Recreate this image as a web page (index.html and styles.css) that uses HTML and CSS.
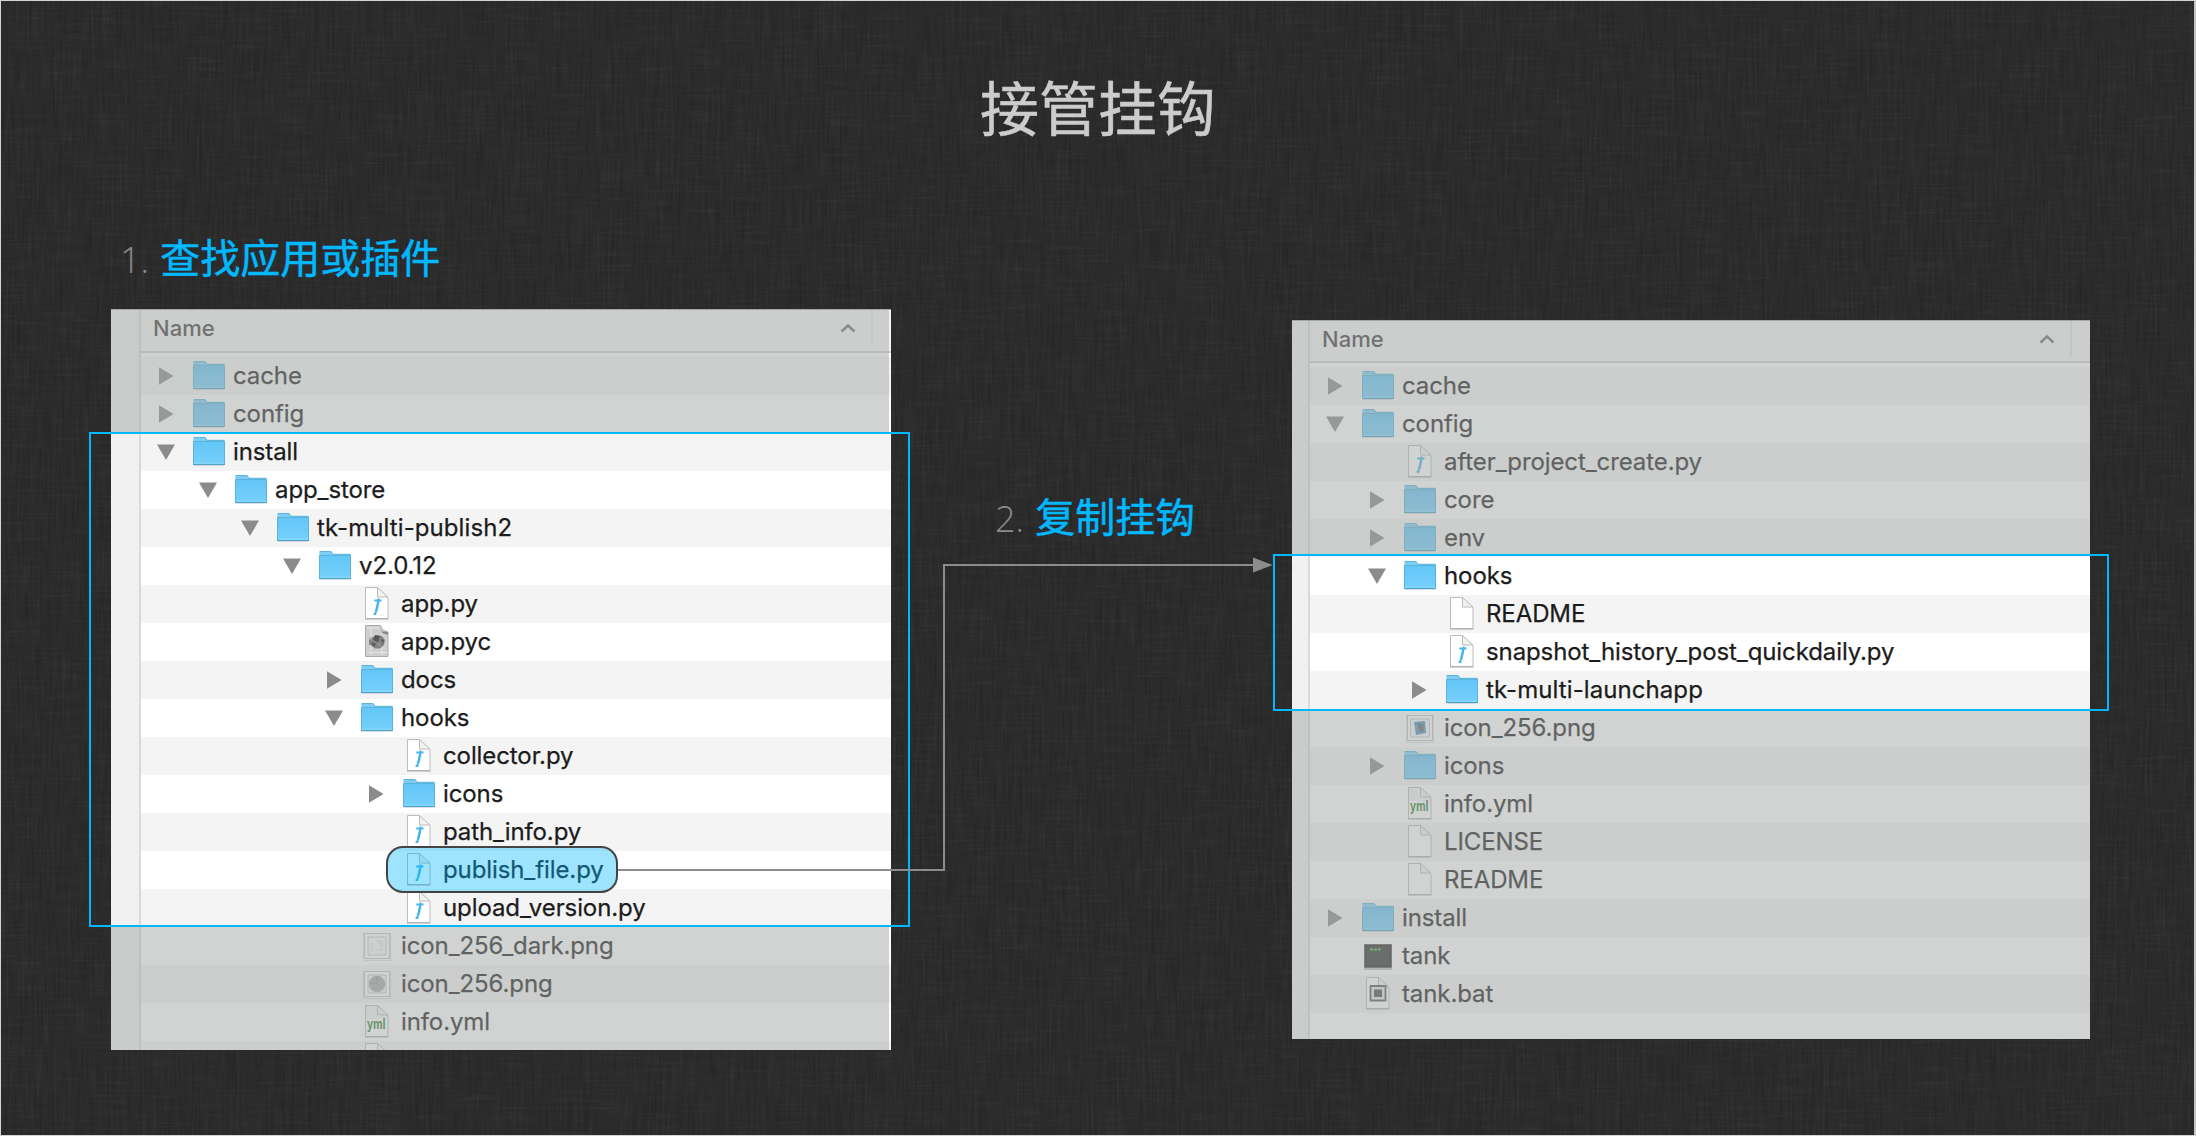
FILE: index.html
```html
<!DOCTYPE html>
<html lang="zh-CN">
<head>
<meta charset="utf-8">
<title>接管挂钩</title>
<link rel="stylesheet" href="styles.css">
</head>
<body>
<svg class="defs" width="0" height="0" aria-hidden="true">
  <defs>
    <linearGradient id="folder-fill" x1="0" y1="0" x2="0" y2="1">
      <stop offset="0" stop-color="#63c6f7"/>
      <stop offset="1" stop-color="#76d0fb"/>
    </linearGradient>
    <symbol id="folder" viewBox="0 0 32 38">
      <path d="M.5 32V5.2Q.5 4 1.700 4H12l2 3h17q.7 0 .7.8V32z" fill="#7fcdf3"/>
      <path d="M.5 5.200Q.5 4.500 1.500 4.500H12l2 2.800h17.500" fill="none" stroke="#5ab4dd"/>
      <path d="M0 8.500h32V32H0z" fill="url(#folder-fill)"/>
      <path d="M.5 8.500h31V31.500H.5z" fill="none" stroke="#58b4df"/>
      <path d="M1 30h30" stroke="#8bdcff"/>
      <path d="M0 31.500h32" stroke="#4ba3cb"/>
      <path d="M1 32.500h30" stroke="#000" stroke-opacity=".12"/>
    </symbol>
    <symbol id="file" viewBox="0 0 32 38">
      <path d="M4.500 2.500h12l10.500 10.500v20.500H4.500z" fill="#fff" stroke="#bcbcbc"/>
      <path d="M16.500 2.500v9.500h10.500z" fill="#f2f2f2" stroke="#bcbcbc"/>
      <path d="M4 34h23.500" stroke="#aaa"/>
    </symbol>
    <symbol id="script" viewBox="0 0 32 38">
      <use href="#file"/>
      <path d="M17.800 13.500L14.300 29M13.300 15.500h7.200M12.600 29h2.500M17.500 17l-2 9" fill="none" stroke="#45b5ee" stroke-width="2"/>
    </symbol>
    <symbol id="compiled" viewBox="0 0 32 38">
      <path d="M4.500 2.500h15l2 4.500 5.500 2v24.500H4.500z" fill="#cfcfcf" stroke="#aaa"/>
      <path d="M6 5h13M6 29.500h20M10 4v28M21 9v23" stroke="#e6e6e6"/>
      <path d="M19 3l2 5.500 6 .5v3l-6-2z" fill="#8a8a8a"/>
      <path d="M8 17l4-3 4-2 5 1 3 4-1 5-4 3.500h-5l-4-3-2-1z" fill="#838383"/>
      <path d="M14 12l5 1-2 6-5-2zM10 19l5 2-2 3zM20 16l3 1-1 4z" fill="#565656"/>
      <path d="M8 16l2-2 1 4M17 20l2 3" stroke="#a7a7a7" fill="none"/>
    </symbol>
    <symbol id="image-frame" viewBox="0 0 32 38">
      <path d="M2.500 6.500h27v27h-27z" fill="none" stroke="#000" stroke-opacity=".12"/>
      <path d="M3.500 6.500h25v25h-25z" fill="#fff" stroke="#c4c4c4"/>
    </symbol>
    <symbol id="image-dark" viewBox="0 0 32 38">
      <use href="#image-frame"/>
      <path d="M7 10h18v18H7z" fill="#f8f8f8" stroke="#c8c8c8"/>
      <path d="M11 24v-8M15 14h4v4M21 14v9h-7" stroke="#dedede" fill="none"/>
    </symbol>
    <symbol id="image-globe" viewBox="0 0 32 38">
      <use href="#image-frame"/>
      <path d="M7 10h18v18H7z" fill="#f2f2f2" stroke="#c8c8c8"/>
      <circle cx="16" cy="19" r="8.200" fill="#a9a9a9"/>
      <path d="M16 11v8l5 4M9 18h7" stroke="#959595" fill="none"/>
    </symbol>
    <symbol id="image-blue" viewBox="0 0 32 38">
      <use href="#image-frame"/>
      <path d="M6.500 10h19v18h-19z" fill="#f4f4f4" stroke="#c8c8c8"/>
      <path d="M10 13l11-1 1 12-10 2z" fill="#4b93bd"/>
      <path d="M14 14l5 1 1 7-6 1z" fill="#5c6a74"/>
      <path d="M12 17l3 5" stroke="#9aa8b0"/>
    </symbol>
    <symbol id="yaml" viewBox="0 0 32 38">
      <use href="#file"/>
      <path d="M5 3h11v9l10 1v3H5z" fill="#ececec" opacity=".7"/>
      <text x="6" y="26" class="yaml-mark" textLength="18.500" lengthAdjust="spacingAndGlyphs">yml</text>
    </symbol>
    <symbol id="terminal" viewBox="0 0 32 38">
      <path d="M2 32h28" stroke="#000" stroke-opacity=".25" stroke-width="2"/>
      <path d="M2.500 7.500h27v23h-27z" fill="#2b2b2b" stroke="#5b5b5b"/>
      <path d="M5 9.500h22v18.500H5z" fill="#353535"/>
      <path d="M8 12.500h10.500" stroke="#4dbb50" stroke-width="2" stroke-dasharray="3 1"/>
    </symbol>
    <symbol id="batch" viewBox="0 0 32 38">
      <use href="#file"/>
      <path d="M8.500 11h15v14.500h-15z" fill="#e4e4e4" stroke="#5b5b5b" stroke-width="1.800"/>
      <path d="M12 14.500h8v7.500h-8z" fill="#4e4e4e"/>
    </symbol>
    <symbol id="closed" viewBox="0 0 18 38"><path d="M2 10.200v17.600L16.600 19z" fill="#8b8b8b"/></symbol>
    <symbol id="open" viewBox="0 0 18 38"><path d="M0 11.500h18L9 27z" fill="#8b8b8b"/></symbol>
    <filter id="weave-rows" x="0" y="0" width="100%" height="100%">
      <feTurbulence type="fractalNoise" baseFrequency="0.022 0.4" numOctaves="2" seed="4"/>
      <feColorMatrix values="0 0 0 0 1  0 0 0 0 1  0 0 0 0 1  .9 0 0 0 -.4"/>
    </filter>
    <filter id="weave-columns" x="0" y="0" width="100%" height="100%">
      <feTurbulence type="fractalNoise" baseFrequency="0.4 0.022" numOctaves="2" seed="9"/>
      <feColorMatrix values="0 0 0 0 0  0 0 0 0 0  0 0 0 0 0  .9 0 0 0 -.4"/>
    </filter>
    <filter id="weave-light" x="0" y="0" width="100%" height="100%">
      <feTurbulence type="fractalNoise" baseFrequency="0.35 0.02" numOctaves="2" seed="21"/>
      <feColorMatrix values="0 0 0 0 1  0 0 0 0 1  0 0 0 0 1  .9 0 0 0 -.4"/>
    </filter>
  </defs>
</svg>

<main class="slide">
  <svg class="linen" width="2196" height="1136" aria-hidden="true">
    <rect width="2196" height="1136" filter="url(#weave-columns)" opacity=".3"/>
    <rect width="2196" height="1136" filter="url(#weave-rows)" opacity=".07"/>
    <rect width="2196" height="1136" filter="url(#weave-light)" opacity=".07"/>
  </svg>

  <h1 class="title">接管挂钩</h1>

  <div class="board">
    <section class="source">
      <h2 class="step"><span class="num">1.</span>查找应用或插件</h2>
      <div class="finder finder-source">
        <div class="gutter"></div>
        <div class="listing">
          <div class="head"><span>Name</span><svg class="sort" viewBox="0 0 16 10"><path d="M1.500 8.500L8 2.500l6.500 6"/></svg></div>
          <ul class="rows">
            <li class="row d0"><svg class="tri"><use href="#closed"/></svg><svg class="ico"><use href="#folder"/></svg>cache</li>
            <li class="row d0"><svg class="tri"><use href="#closed"/></svg><svg class="ico"><use href="#folder"/></svg>config</li>
            <li class="row d0"><svg class="tri"><use href="#open"/></svg><svg class="ico"><use href="#folder"/></svg>install</li>
            <li class="row d1"><svg class="tri"><use href="#open"/></svg><svg class="ico"><use href="#folder"/></svg>app_store</li>
            <li class="row d2 wide"><svg class="tri"><use href="#open"/></svg><svg class="ico"><use href="#folder"/></svg>tk-multi-publish2</li>
            <li class="row d3"><svg class="tri"><use href="#open"/></svg><svg class="ico"><use href="#folder"/></svg>v2.0.12</li>
            <li class="row d4"><svg class="tri"></svg><svg class="ico"><use href="#script"/></svg>app.py</li>
            <li class="row d4"><svg class="tri"></svg><svg class="ico"><use href="#compiled"/></svg>app.pyc</li>
            <li class="row d4"><svg class="tri"><use href="#closed"/></svg><svg class="ico"><use href="#folder"/></svg>docs</li>
            <li class="row d4"><svg class="tri"><use href="#open"/></svg><svg class="ico"><use href="#folder"/></svg>hooks</li>
            <li class="row d5"><svg class="tri"></svg><svg class="ico"><use href="#script"/></svg>collector.py</li>
            <li class="row d5"><svg class="tri"><use href="#closed"/></svg><svg class="ico"><use href="#folder"/></svg>icons</li>
            <li class="row d5"><svg class="tri"></svg><svg class="ico"><use href="#script"/></svg>path_info.py</li>
            <li class="row d5"><svg class="tri"></svg><svg class="ico"><use href="#script"/></svg>publish_file.py</li>
            <li class="row d5"><svg class="tri"></svg><svg class="ico"><use href="#script"/></svg>upload_version.py</li>
            <li class="row d4"><svg class="tri"></svg><svg class="ico"><use href="#image-dark"/></svg>icon_256_dark.png</li>
            <li class="row d4"><svg class="tri"></svg><svg class="ico"><use href="#image-globe"/></svg>icon_256.png</li>
            <li class="row d4"><svg class="tri"></svg><svg class="ico"><use href="#yaml"/></svg>info.yml</li>
            <li class="row d4"><svg class="tri"></svg><svg class="ico"><use href="#file"/></svg></li>
          </ul>
        </div>
        <div class="dim dim-top"></div>
        <div class="dim dim-bottom"></div>
      </div>
    </section>

    <section class="copy">
      <h2 class="step"><span class="num">2.</span>复制挂钩</h2>
    </section>

    <section class="target">
      <div class="finder finder-target">
        <div class="gutter"></div>
        <div class="listing">
          <div class="head"><span>Name</span><svg class="sort" viewBox="0 0 16 10"><path d="M1.500 8.500L8 2.500l6.500 6"/></svg></div>
          <ul class="rows">
            <li class="row d0"><svg class="tri"><use href="#closed"/></svg><svg class="ico"><use href="#folder"/></svg>cache</li>
            <li class="row d0"><svg class="tri"><use href="#open"/></svg><svg class="ico"><use href="#folder"/></svg>config</li>
            <li class="row d1"><svg class="tri"></svg><svg class="ico"><use href="#script"/></svg>after_project_create.py</li>
            <li class="row d1"><svg class="tri"><use href="#closed"/></svg><svg class="ico"><use href="#folder"/></svg>core</li>
            <li class="row d1"><svg class="tri"><use href="#closed"/></svg><svg class="ico"><use href="#folder"/></svg>env</li>
            <li class="row d1"><svg class="tri"><use href="#open"/></svg><svg class="ico"><use href="#folder"/></svg>hooks</li>
            <li class="row d2"><svg class="tri"></svg><svg class="ico"><use href="#file"/></svg>README</li>
            <li class="row d2"><svg class="tri"></svg><svg class="ico"><use href="#script"/></svg>snapshot_history_post_quickdaily.py</li>
            <li class="row d2 wide"><svg class="tri"><use href="#closed"/></svg><svg class="ico"><use href="#folder"/></svg>tk-multi-launchapp</li>
            <li class="row d1"><svg class="tri"></svg><svg class="ico"><use href="#image-blue"/></svg>icon_256.png</li>
            <li class="row d1"><svg class="tri"><use href="#closed"/></svg><svg class="ico"><use href="#folder"/></svg>icons</li>
            <li class="row d1"><svg class="tri"></svg><svg class="ico"><use href="#yaml"/></svg>info.yml</li>
            <li class="row d1"><svg class="tri"></svg><svg class="ico"><use href="#file"/></svg>LICENSE</li>
            <li class="row d1"><svg class="tri"></svg><svg class="ico"><use href="#file"/></svg>README</li>
            <li class="row d0"><svg class="tri"><use href="#closed"/></svg><svg class="ico"><use href="#folder"/></svg>install</li>
            <li class="row d0"><svg class="tri"></svg><svg class="ico"><use href="#terminal"/></svg>tank</li>
            <li class="row d0"><svg class="tri"></svg><svg class="ico"><use href="#batch"/></svg>tank.bat</li>
          </ul>
        </div>
        <div class="dim dim-top"></div>
        <div class="dim dim-bottom"></div>
      </div>
    </section>
  </div>

  <div class="focus focus-source"></div>
  <div class="focus focus-target"></div>
  <svg class="connector" width="2196" height="1136" aria-hidden="true">
    <path d="M617 870H944V565H1254" fill="none" stroke="#8c8c8c" stroke-width="2"/>
    <path d="M1253 557.500V572.500L1272.500 565z" fill="#8c8c8c"/>
  </svg>
  <div class="picked"></div>
</main>
</body>
</html>
```
FILE: styles.css
```css
* { box-sizing: border-box; }

body { margin: 0; }

.defs { position: absolute; }

.slide {
  position: relative;
  width: 2196px;
  height: 1136px;
  overflow: hidden;
  background: #2b2b2b;
  font-family: "Noto Sans CJK SC", sans-serif;
}

.slide::after {
  content: "";
  position: absolute;
  inset: 0;
  border: 1px solid #cdd6d3;
  border-right: 2px solid #c4c4c4;
}

.linen {
  position: absolute;
  inset: 0;
}

.title {
  position: relative;
  margin: 0;
  padding-top: 62px;
  height: 236px;
  font-size: 59px;
  line-height: 88px;
  font-weight: 400;
  text-align: center;
  color: #ccc;
  -webkit-text-stroke: .5px #ccc;
}

.board {
  position: relative;
  display: grid;
  grid-template-columns: 780px 401px 798px;
  padding-left: 111px;
}

.step {
  display: flex;
  align-items: baseline;
  gap: 10px;
  margin: 0;
  font-size: 40px;
  line-height: 40px;
  font-weight: 400;
  color: #00b8ff;
  -webkit-text-stroke: .5px #00b8ff;
  white-space: nowrap;
}

.num {
  font-family: "Open Sans", sans-serif;
  font-size: 36px;
  font-weight: 300;
  color: #8a8a8a;
  -webkit-text-stroke: 0;
}

.source .step {
  height: 73px;
  padding-left: 9px;
}

.source .step,
.copy .step { gap: 11px; }

.copy { padding: 259px 0 0 104px; }

.target { padding-top: 84px; }

.finder {
  position: relative;
  display: flex;
  overflow: hidden;
  background: #fff;
  font-family: Inter, sans-serif;
  color: #1c1c1c;
}

.finder::after {
  content: "";
  position: absolute;
  inset: 0 0 auto;
  height: 1px;
  background: #a3a3a3;
}

.finder-source { height: 740.5px; }
.finder-target { height: 718.5px; }

.gutter {
  background: #f1f1f1;
  border-right: 2px solid #d9d9d9;
}

.finder-source .gutter { flex: 0 0 30px; }
.finder-target .gutter { flex: 0 0 18px; }

.listing {
  flex: 1;
  min-width: 0;
}

.head {
  position: relative;
  display: flex;
  align-items: center;
  justify-content: space-between;
  height: 44px;
  margin-bottom: 3.600px;
  padding: 0 35px 4px 12px;
  border-bottom: 2px solid #cfcfcf;
  background: #f4f4f4;
  font-size: 22px;
  font-weight: 500;
  color: #3c3c3c;
}

.finder-target .head {
  height: 43px;
  padding: 0 35px 4px 12px;
}

.head::after {
  content: "";
  position: absolute;
  top: 1px;
  right: 18px;
  width: 2px;
  height: 36px;
  background: #e2e2e2;
}

.sort {
  width: 16px;
  height: 10px;
  fill: none;
  stroke: #707070;
  stroke-width: 2.400;
}

.rows {
  margin: 0;
  padding: 0;
  list-style: none;
}

.row {
  display: flex;
  align-items: center;
  height: 38px;
  padding-top: 1px;
  font-size: 24px;
  font-weight: 400;
  line-height: 38px;
  letter-spacing: -.1px;
  -webkit-text-stroke: .25px currentColor;
  white-space: nowrap;
}

.row:nth-child(odd) { background: #f4f4f4; }

.wide { letter-spacing: .08px; }

.d0 { padding-left: 16px; }
.d1 { padding-left: 58px; }
.d2 { padding-left: 100px; }
.d3 { padding-left: 142px; }
.d4 { padding-left: 184px; }
.d5 { padding-left: 226px; }

.tri {
  flex: none;
  width: 18px;
  height: 38px;
  margin-right: 18px;
}

.ico {
  flex: none;
  width: 32px;
  height: 38px;
  margin-right: 8px;
}

.yaml-mark {
  font: 700 15px "Liberation Sans", sans-serif;
  letter-spacing: 0;
  fill: #2b7d33;
}

.dim {
  position: absolute;
  left: 0;
  right: 0;
  background: rgba(163, 167, 165, .5);
}

.finder-source .dim { right: 2px; }
.finder-source .dim-top { top: 0; height: 123px; }
.finder-source .dim-bottom { top: 617px; bottom: 0; }
.finder-target .dim-top { top: 0; height: 235px; }
.finder-target .dim-bottom { top: 390px; bottom: 0; }

.focus {
  position: absolute;
  border: 2px solid #00b8ff;
}

.focus-source {
  left: 89px;
  top: 432px;
  width: 821px;
  height: 495px;
}

.focus-target {
  left: 1273px;
  top: 554px;
  width: 836px;
  height: 157px;
}

.connector {
  position: absolute;
  inset: 0;
}

.picked {
  position: absolute;
  left: 386px;
  top: 846px;
  width: 232px;
  height: 47px;
  border: 2px solid #444;
  border-radius: 17px;
  background: rgba(0, 184, 255, .38);
}
```
